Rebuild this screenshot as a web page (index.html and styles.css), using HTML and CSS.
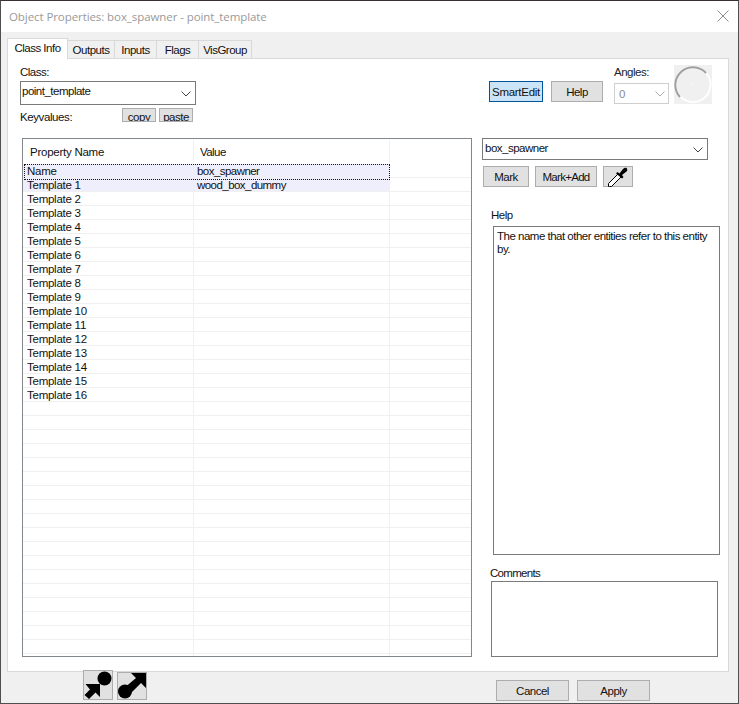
FILE: index.html
```html
<!DOCTYPE html>
<html>
<head>
<meta charset="utf-8">
<title>Object Properties</title>
<link rel="stylesheet" href="styles.css">
</head>
<body>
<div class="window">
  <header class="titlebar">
    <span class="title">Object Properties: box_spawner - point_template</span>
    <svg class="close" width="12" height="12" viewBox="0 0 12 12"><path d="M.5.5l11 11M11.5.5l-11 11" stroke="#8c8c8c" fill="none"/></svg>
  </header>
  <div class="tabs">
    <span class="tab active">Class Info</span>
    <span class="tab w-out">Outputs</span>
    <span class="tab w-in">Inputs</span>
    <span class="tab w-fl">Flags</span>
    <span class="tab w-vg">VisGroup</span>
  </div>
  <main class="panel">
    <section class="top">
      <div class="classbox">
        <label class="lbl-class">Class:</label>
        <div class="combo combo-class"><span>point_template</span><svg class="chev" width="10" height="6" viewBox="0 0 10 6"><path d="M.5.5L5 5 9.500.5" fill="none" stroke="#444"/></svg></div>
        <div class="kv">
          <label class="lbl-kv">Keyvalues:</label>
          <button class="btn mini mini-copy"><span>copy</span></button>
          <button class="btn mini mini-paste"><span>paste</span></button>
        </div>
      </div>
      <button class="btn smart">SmartEdit</button>
      <button class="btn help">Help</button>
      <div class="angles">
        <label class="lbl-ang">Angles:</label>
        <div class="combo combo-ang"><span>0</span><svg class="chev" width="10" height="6" viewBox="0 0 10 6"><path d="M.5.5L5 5 9.500.5" fill="none" stroke="#aaa"/></svg></div>
      </div>
      <div class="dial">
        <svg width="38" height="39" viewBox="0 0 38 39">
          <circle cx="19" cy="19.500" r="17.500" fill="none" stroke="#fff" stroke-width="2"/>
          <path d="M32 8A17.500 17.500 0 0 0 6 32" fill="none" stroke="#a0a0a0" stroke-width="2"/>
          <rect x="18" y="19" width="1" height="1" fill="#fff"/>
        </svg>
      </div>
    </section>
    <section class="bottom">
      <div class="list">
        <div class="list-head"><span class="c1">Property Name</span><span class="c2">Value</span><span class="c3"></span></div>
        <div class="row sel focus"><span class="c1">Name</span><span class="c2">box_spawner</span><span class="c3"></span></div>
        <div class="row sel"><span class="c1">Template 1</span><span class="c2">wood_box_dummy</span><span class="c3"></span></div>
        <div class="row"><span class="c1">Template 2</span><span class="c2"></span><span class="c3"></span></div>
        <div class="row"><span class="c1">Template 3</span><span class="c2"></span><span class="c3"></span></div>
        <div class="row"><span class="c1">Template 4</span><span class="c2"></span><span class="c3"></span></div>
        <div class="row"><span class="c1">Template 5</span><span class="c2"></span><span class="c3"></span></div>
        <div class="row"><span class="c1">Template 6</span><span class="c2"></span><span class="c3"></span></div>
        <div class="row"><span class="c1">Template 7</span><span class="c2"></span><span class="c3"></span></div>
        <div class="row"><span class="c1">Template 8</span><span class="c2"></span><span class="c3"></span></div>
        <div class="row"><span class="c1">Template 9</span><span class="c2"></span><span class="c3"></span></div>
        <div class="row"><span class="c1">Template 10</span><span class="c2"></span><span class="c3"></span></div>
        <div class="row"><span class="c1">Template 11</span><span class="c2"></span><span class="c3"></span></div>
        <div class="row"><span class="c1">Template 12</span><span class="c2"></span><span class="c3"></span></div>
        <div class="row"><span class="c1">Template 13</span><span class="c2"></span><span class="c3"></span></div>
        <div class="row"><span class="c1">Template 14</span><span class="c2"></span><span class="c3"></span></div>
        <div class="row"><span class="c1">Template 15</span><span class="c2"></span><span class="c3"></span></div>
        <div class="row"><span class="c1">Template 16</span><span class="c2"></span><span class="c3"></span></div>
        <div class="filler"><span class="c1"></span><span class="c2"></span><span class="c3"></span></div>
      </div>
      <aside class="side">
        <div class="combo combo-val"><span>box_spawner</span><svg class="chev" width="10" height="6" viewBox="0 0 10 6"><path d="M.5.5L5 5 9.500.5" fill="none" stroke="#444"/></svg></div>
        <div class="actions">
          <button class="btn mark">Mark</button>
          <button class="btn markadd">Mark+Add</button>
          <button class="btn pipette">
            <svg width="20" height="20" viewBox="0 0 20 20"><path d="M1.500 19.500h-1v-3L10 7l3 3-9.500 9.500z" fill="#fff" stroke="#000"/><path d="M8 6.500L9.500 5l2 1.500L15 2c1.500-1.500 3-1.500 3.500-1S20 3 18.500 4.500L14 8l1.500 2L14 11.500z" fill="#000"/></svg>
          </button>
        </div>
        <label class="lbl-help">Help</label>
        <div class="helpbox">The name that other entities refer to this entity by.</div>
        <label class="lbl-comments">Comments</label>
        <div class="commentbox"></div>
      </aside>
    </section>
  </main>
  <footer class="footer">
    <div class="icons">
      <button class="btn icon icon-a">
        <svg width="28" height="28" viewBox="0 0 28 28"><circle cx="20.500" cy="7.500" r="7" fill="#000"/><path d="M1.500 13H16v13l-4.500-4.500L5 28 .5 24 6 18.500z" fill="#000"/></svg>
      </button>
      <button class="btn icon icon-b">
        <svg width="28" height="26" viewBox="0 0 28 26"><circle cx="7" cy="18.500" r="7" fill="#000"/><path d="M13 0h15v15l-5-5-12 12-6-6L18 5z" fill="#000"/></svg>
      </button>
    </div>
    <div class="dialog-btns">
      <button class="btn cancel">Cancel</button>
      <button class="btn apply">Apply</button>
    </div>
  </footer>
</div>
</body>
</html>
```
FILE: styles.css
```css
* { box-sizing: border-box; }
html, body { margin: 0; padding: 0; }
body {
  width: 739px;
  height: 704px;
  overflow: hidden;
  font-family: "Liberation Sans", Arial, sans-serif;
  font-size: 11.500px;
  letter-spacing: -.5px;
  color: #111;
}
.window {
  width: 739px;
  height: 704px;
  background: #f0f0f0;
  border: 1px solid #4f4f4f;
  border-top-color: #3a3034;
  display: flex;
  flex-direction: column;
}
.titlebar {
  height: 31px;
  background: #fff;
  display: flex;
  align-items: center;
  justify-content: space-between;
  padding: 0 9px 0 8px;
  flex: none;
}
.title { font-family: "Open Sans", sans-serif; font-size: 11.500px; color: #9a9a9a; letter-spacing: -.08px; }
.close { display: block; margin-top: -1px; }

.tabs {
  height: 27px;
  padding: 7px 0 0 6px;
  display: flex;
  align-items: flex-end;
  flex: none;
  position: relative;
  z-index: 1;
  margin-bottom: -1px;
}
.tab {
  height: 18px;
  margin-bottom: 1px;
  width: 47px;
  background: #f0f0f0;
  border: 1px solid #d9d9d9;
  border-left: 0;
  border-bottom: 0;
  text-align: center;
  line-height: 18px;
}
.tab.active {
  width: 61px;
  height: 21px;
  margin-bottom: 0;
  background: #fff;
  border: 1px solid #d9d9d9;
  border-bottom: 0;
  line-height: 18px;
}
.w-in { width: 42px; }
.w-fl { width: 42px; }
.w-vg { width: 53px; }

.panel {
  margin-left: 6px;
  width: 722px;
  height: 614px;
  flex: none;
  background: #fff;
  border: 1px solid #d9d9d9;
}

.top {
  height: 79px;
  display: flex;
  align-items: flex-start;
}
.classbox { width: 176px; margin: 6px 0 0 12px; flex: none; }
.lbl-class { display: block; height: 16px; line-height: 14px; }
.combo {
  display: flex;
  align-items: center;
  justify-content: space-between;
  border: 1px solid #7a7a7a;
  background: #fff;
  padding: 0 4px 0 1px;
}
.combo span { position: relative; }
.combo-class { height: 24px; }
.combo-class span { top: -2px; }
.chev { display: block; margin-top: 1px; }
.kv { display: flex; align-items: flex-start; height: 18px; margin-top: 3px; }
.lbl-kv { width: 102px; line-height: 14px; margin-top: 2px; letter-spacing: -.4px; }
.mini {
  height: 14px;
  overflow: hidden;
  padding: 0;
}
.mini span { display: block; position: relative; top: 1px; line-height: 14px; }
.mini-copy { width: 34px; margin-right: 3px; letter-spacing: .3px; }
.mini-paste { width: 34px; letter-spacing: -.3px; }

.btn {
  display: block;
  font: inherit;
  letter-spacing: inherit;
  color: #111;
  background: #e1e1e1;
  border: 1px solid #adadad;
  padding: 0;
}
.smart {
  width: 54px;
  height: 21px;
  margin: 22px 0 0 293px;
  background: #cce4f7;
  border-color: #005499;
  letter-spacing: -.3px;
}
.help {
  width: 52px;
  height: 21px;
  margin: 22px 0 0 8px;
}
.angles { width: 55px; margin: 6px 0 0 11px; flex: none; }
.lbl-ang { display: block; height: 18px; line-height: 14px; color: #222; }
.combo-ang { height: 21px; border-color: #cfcfcf; color: #8a8a8a; padding: 0 3px 0 4px; }
.dial {
  width: 38px;
  height: 39px;
  margin: 6px 0 0 5px;
  background: #f0f0f0;
  flex: none;
}
.dial svg { display: block; }

.bottom { display: flex; align-items: flex-start; }
.list {
  width: 450px;
  height: 519px;
  margin-left: 14px;
  border: 1px solid #82878c;
  display: flex;
  flex-direction: column;
  flex: none;
  overflow: hidden;
  background: #fff;
}
.list-head, .row, .filler { display: flex; flex: none; }
.c1 { width: 171px; padding-left: 4px; border-right: 1px solid #f0f0f0; flex: none; letter-spacing: -.25px; }
.c2 { width: 196px; padding-left: 3px; border-right: 1px solid #f0f0f0; flex: none; letter-spacing: -.55px; }
.c3 { flex: 1; }
.list-head { height: 25px; }
.list-head .c1 { padding-left: 7px; height: 23px; margin-top: 1px; line-height: 25px; }
.list-head .c2 { padding-left: 6px; height: 23px; margin-top: 1px; line-height: 25px; }
.row {
  height: 14px;
  line-height: 14px;
  background: #fff;
  border-bottom: 1px solid #f0f0f0;
}
.row.sel .c1, .row.sel .c2 { background: #eeeefc; border-right-color: #eeeefc; }
.row.focus { position: relative; }
.row.focus::after {
  content: "";
  position: absolute;
  left: 1px;
  top: 0;
  width: 364px;
  height: 14px;
  border: 1px dotted #111;
  pointer-events: none;
}
.filler {
  flex: 1;
  background-image: linear-gradient(to bottom, transparent 13px, #f0f0f0 13px);
  background-size: 100% 14px;
}

.side { width: 236px; margin-left: 10px; flex: none; display: flex; flex-direction: column; }
.combo-val { width: 226px; height: 22px; padding-left: 2px; }
.combo-val span { top: -1px; }
.actions { display: flex; margin: 6px 0 0 1px; gap: 6px; }
.mark { width: 46px; height: 21px; }
.markadd { width: 62px; height: 21px; letter-spacing: -.7px; }
.pipette { width: 30px; height: 21px; display: flex; align-items: center; justify-content: center; }
.pipette svg { display: block; }
.lbl-help { margin: 21px 0 0 9px; height: 18px; line-height: 14px; }
.helpbox {
  width: 227px;
  height: 329px;
  margin-left: 11px;
  border: 1px solid #7a7a7a;
  padding: 3px 3px;
  line-height: 13px;
}
.lbl-comments { margin: 11px 0 0 8px; height: 15px; line-height: 14px; letter-spacing: -.7px; }
.commentbox {
  width: 227px;
  height: 76px;
  margin-left: 9px;
  border: 1px solid #7a7a7a;
}

.footer {
  flex: 1;
  display: flex;
  justify-content: space-between;
  align-items: flex-start;
}
.icons {
  display: flex;
  align-items: flex-end;
  gap: 4px;
  margin: -2px 0 0 82px;
}
.icon { width: 30px; height: 30px; display: flex; align-items: center; justify-content: center; }
.icon-b { height: 28px; }
.icon svg { display: block; }
.dialog-btns { display: flex; gap: 8px; margin: 8px 88px 0 0; }
.cancel, .apply { width: 73px; height: 21px; }
```
